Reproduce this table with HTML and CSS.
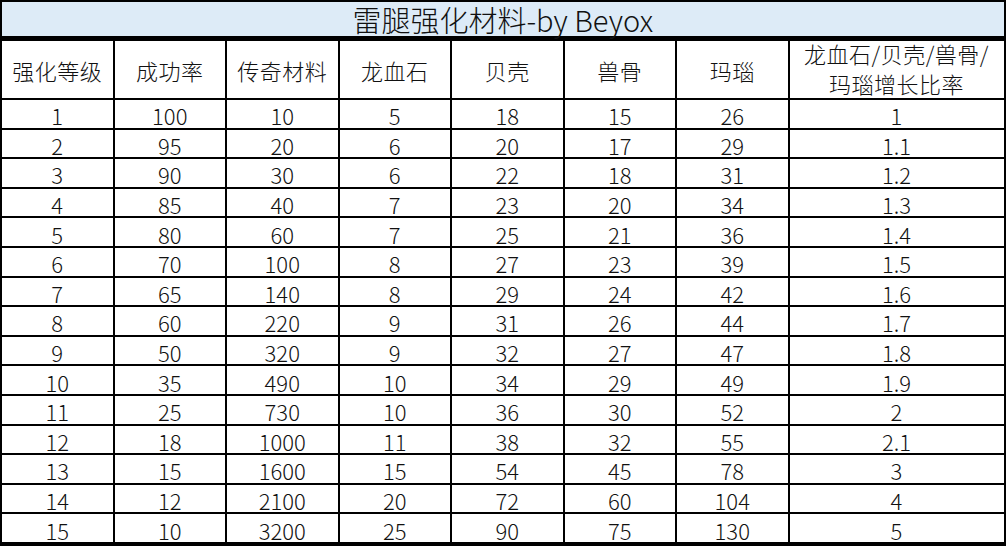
FILE: index.html
```html
<!DOCTYPE html>
<html lang="zh-CN">
<head>
<meta charset="utf-8">
<title>雷腿强化材料</title>
<link rel="stylesheet" href="styles.css">
</head>
<body>
<div class="sheet">
  <div class="title">雷腿强化材料-by Beyox</div>
  <div class="cell head">强化等级</div>
  <div class="cell head">成功率</div>
  <div class="cell head">传奇材料</div>
  <div class="cell head">龙血石</div>
  <div class="cell head">贝壳</div>
  <div class="cell head">兽骨</div>
  <div class="cell head">玛瑙</div>
  <div class="cell head two">龙血石/贝壳/兽骨/<br>玛瑙增长比率</div>

  <div class="cell">1</div><div class="cell">100</div><div class="cell">10</div><div class="cell">5</div><div class="cell">18</div><div class="cell">15</div><div class="cell">26</div><div class="cell">1</div>
  <div class="cell">2</div><div class="cell">95</div><div class="cell">20</div><div class="cell">6</div><div class="cell">20</div><div class="cell">17</div><div class="cell">29</div><div class="cell">1.1</div>
  <div class="cell">3</div><div class="cell">90</div><div class="cell">30</div><div class="cell">6</div><div class="cell">22</div><div class="cell">18</div><div class="cell">31</div><div class="cell">1.2</div>
  <div class="cell">4</div><div class="cell">85</div><div class="cell">40</div><div class="cell">7</div><div class="cell">23</div><div class="cell">20</div><div class="cell">34</div><div class="cell">1.3</div>
  <div class="cell">5</div><div class="cell">80</div><div class="cell">60</div><div class="cell">7</div><div class="cell">25</div><div class="cell">21</div><div class="cell">36</div><div class="cell">1.4</div>
  <div class="cell">6</div><div class="cell">70</div><div class="cell">100</div><div class="cell">8</div><div class="cell">27</div><div class="cell">23</div><div class="cell">39</div><div class="cell">1.5</div>
  <div class="cell">7</div><div class="cell">65</div><div class="cell">140</div><div class="cell">8</div><div class="cell">29</div><div class="cell">24</div><div class="cell">42</div><div class="cell">1.6</div>
  <div class="cell">8</div><div class="cell">60</div><div class="cell">220</div><div class="cell">9</div><div class="cell">31</div><div class="cell">26</div><div class="cell">44</div><div class="cell">1.7</div>
  <div class="cell">9</div><div class="cell">50</div><div class="cell">320</div><div class="cell">9</div><div class="cell">32</div><div class="cell">27</div><div class="cell">47</div><div class="cell">1.8</div>
  <div class="cell">10</div><div class="cell">35</div><div class="cell">490</div><div class="cell">10</div><div class="cell">34</div><div class="cell">29</div><div class="cell">49</div><div class="cell">1.9</div>
  <div class="cell">11</div><div class="cell">25</div><div class="cell">730</div><div class="cell">10</div><div class="cell">36</div><div class="cell">30</div><div class="cell">52</div><div class="cell">2</div>
  <div class="cell">12</div><div class="cell">18</div><div class="cell">1000</div><div class="cell">11</div><div class="cell">38</div><div class="cell">32</div><div class="cell">55</div><div class="cell">2.1</div>
  <div class="cell">13</div><div class="cell">15</div><div class="cell">1600</div><div class="cell">15</div><div class="cell">54</div><div class="cell">45</div><div class="cell">78</div><div class="cell">3</div>
  <div class="cell">14</div><div class="cell">12</div><div class="cell">2100</div><div class="cell">20</div><div class="cell">72</div><div class="cell">60</div><div class="cell">104</div><div class="cell">4</div>
  <div class="cell">15</div><div class="cell">10</div><div class="cell">3200</div><div class="cell">25</div><div class="cell">90</div><div class="cell">75</div><div class="cell">130</div><div class="cell">5</div>
</div>
</body>
</html>
```

FILE: styles.css
```css
html, body {
  margin: 0;
  padding: 0;
  background: #ffffff;
}

.sheet {
  box-sizing: border-box;
  width: 1006px;
  height: 546px;
  display: grid;
  grid-template-columns: repeat(7, 110.5px) 214px;
  grid-template-rows: 37px 57px repeat(15, 27.6px);
  gap: 2px;
  padding: 2px 3px 4px 2px;
  background: #000000;
  font-family: "Noto Sans CJK SC", "Noto Sans", sans-serif;
  font-weight: 300;
  color: #111111;
}

.title {
  grid-column: 1 / -1;
  background: #ddebf7;
  border-bottom: 3px solid #000000;
  display: flex;
  align-items: flex-end;
  justify-content: center;
  font-size: 29px;
  line-height: 34px;
  white-space: nowrap;
}

.cell {
  background: #ffffff;
  display: flex;
  align-items: center;
  justify-content: center;
  font-size: 22px;
  line-height: 1;
  padding-top: 3px;
  box-sizing: border-box;
  white-space: nowrap;
}

.head {
  padding-top: 0;
  letter-spacing: 0.5px;
}

.two {
  text-align: center;
  line-height: 30px;
  align-items: flex-end;
}
```
